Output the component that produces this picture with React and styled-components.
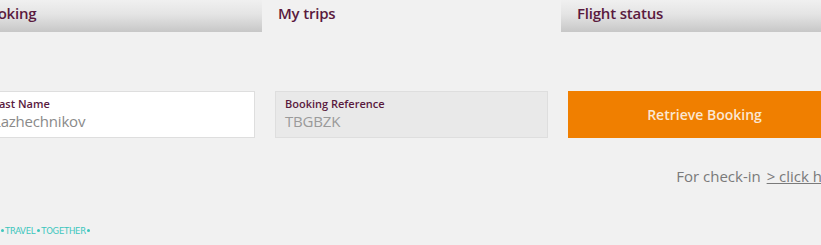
import React from 'react';
import styled, { createGlobalStyle } from 'styled-components';

const GlobalStyle = createGlobalStyle`
  html, body {
    margin: 0;
    padding: 0;
    background: #f1f1f1;
    overflow: hidden;
  }
  body {
    font-family: "Open Sans", "Liberation Sans", sans-serif;
  }
`;

const Page = styled.div`
  width: 900px;
  height: 245px;
  margin-left: -37px;
  background: #f1f1f1;
  display: flex;
  flex-direction: column;
`;

const Tabs = styled.div`
  display: grid;
  grid-template-columns: repeat(3, 299px);
  height: 32px;
`;

const Tab = styled.div`
  padding: 0 16px;
  line-height: 27px;
  font-size: 15px;
  font-weight: 600;
  letter-spacing: -0.2px;
  color: #5a1a3e;
  background: ${(p) =>
    p.$active
      ? '#f1f1f1'
      : 'linear-gradient(to bottom, #f0f0f0 0%, #e4e4e4 45%, #c7c7c7 100%)'};
`;

const Form = styled.div`
  margin-top: 59px;
  padding-left: 20px;
  width: 873px;
  display: flex;
  flex-direction: column;
`;

const FieldRow = styled.div`
  display: grid;
  grid-template-columns: 272px 273px 273px;
  column-gap: 20px;
`;

const Field = styled.div`
  box-sizing: border-box;
  height: 47px;
  padding: 5px 9px 0;
  border: 1px solid #dedede;
  background: ${(p) => (p.$disabled ? '#e9e9e9' : '#ffffff')};
  display: flex;
  flex-direction: column;
`;

const Label = styled.span`
  font-size: 11px;
  font-weight: 600;
  line-height: 14px;
  color: #5a1a3e;
`;

const Value = styled.span`
  font-size: 15px;
  line-height: 20px;
  letter-spacing: -0.2px;
  color: ${(p) => (p.$disabled ? '#9a9a9a' : '#8a8a8a')};
`;

const Button = styled.button`
  box-sizing: border-box;
  height: 47px;
  border: none;
  background: #f07f00;
  color: #fbe7d2;
  font-family: "Open Sans", "Liberation Sans", sans-serif;
  font-size: 14px;
  font-weight: 600;
  cursor: pointer;
`;

const CheckIn = styled.p`
  margin: 28px 11px 0 0;
  text-align: right;
  font-size: 15px;
  line-height: 20px;
  color: #7a7a7a;

  a {
    margin-left: 2px;
    color: #7a7a7a;
    text-decoration: underline;
  }
`;

const Slogan = styled.div`
  margin-top: 39px;
  margin-left: 36px;
  font-family: "DejaVu Sans Condensed", "DejaVu Sans", sans-serif;
  font-stretch: condensed;
  font-size: 9.5px;
  letter-spacing: -0.3px;
  color: #3cc6bd;
  display: flex;
  align-items: center;
`;

const Dot = styled.span`
  width: 3px;
  height: 3px;
  border-radius: 50%;
  background: #3cc6bd;
  margin: 0 1.5px;
`;

const App = () => {
  const tabs = [
    { name: 'Booking' },
    { name: 'My trips', active: true },
    { name: 'Flight status' },
  ];

  return (
    <>
      <GlobalStyle />
      <Page>
        <Tabs>
          {tabs.map((tab) => (
            <Tab key={tab.name} $active={tab.active}>
              {tab.name}
            </Tab>
          ))}
        </Tabs>
        <Form>
          <FieldRow>
            <Field>
              <Label>Last Name</Label>
              <Value>Lazhechnikov</Value>
            </Field>
            <Field $disabled>
              <Label>Booking Reference</Label>
              <Value $disabled>TBGBZK</Value>
            </Field>
            <Button>Retrieve Booking</Button>
          </FieldRow>
          <CheckIn>
            For check-in <a href="#">&gt; click here</a>
          </CheckIn>
        </Form>
        <Slogan>
          <Dot />
          TRAVEL
          <Dot />
          TOGETHER
          <Dot />
        </Slogan>
      </Page>
    </>
  );
};

export default App;
